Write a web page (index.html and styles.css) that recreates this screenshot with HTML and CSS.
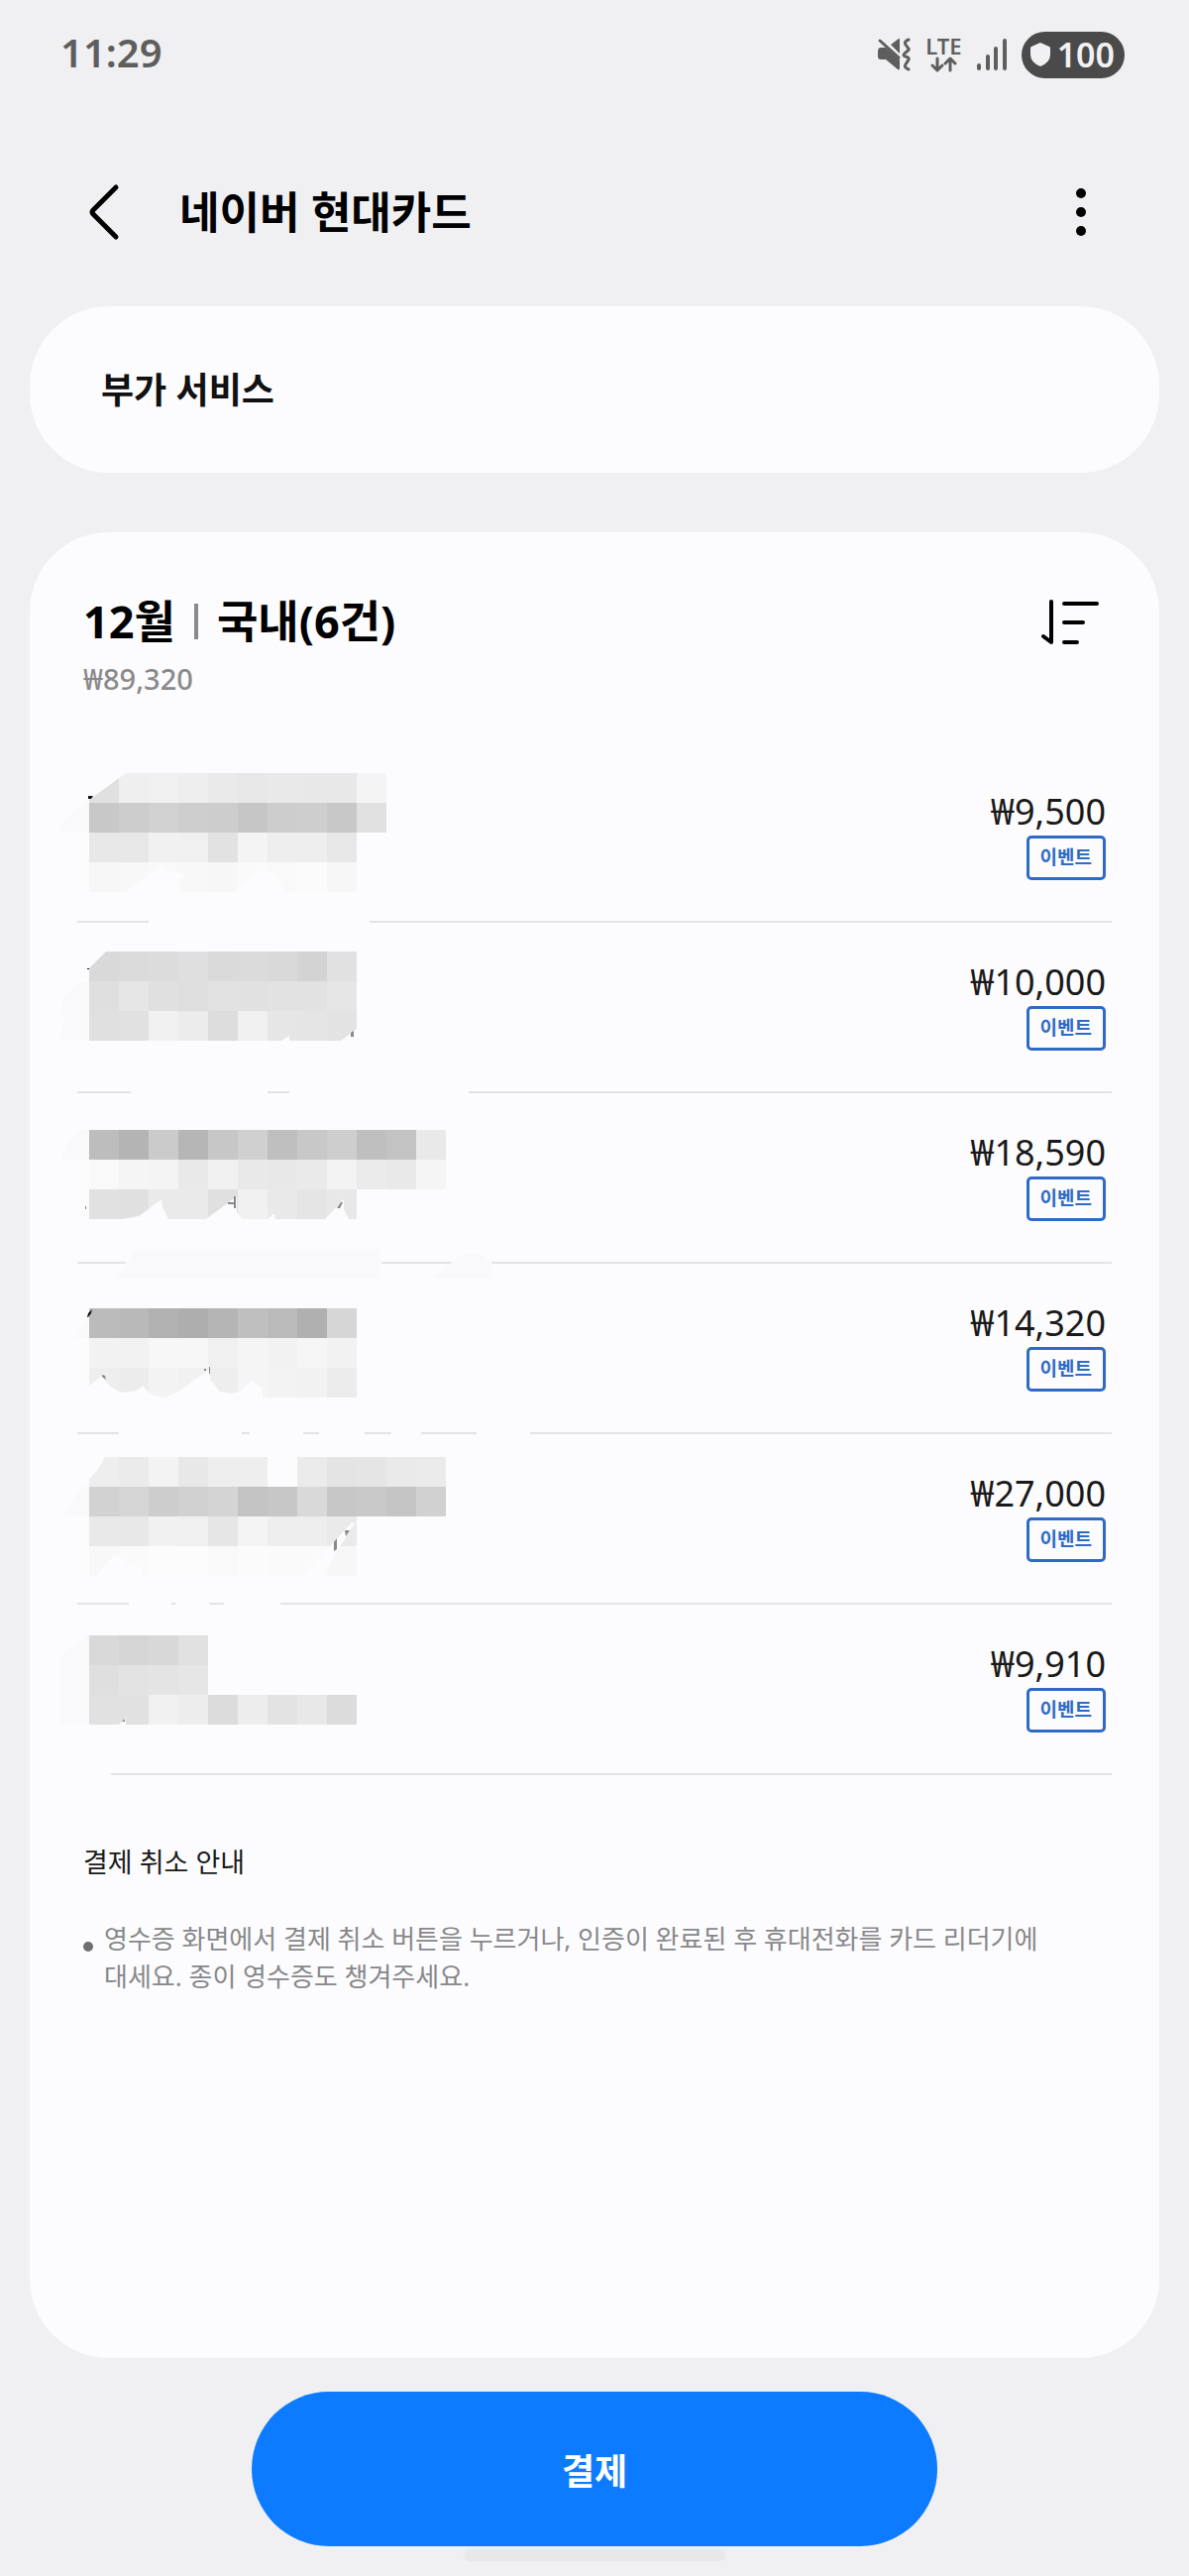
FILE: index.html
```html
<!DOCTYPE html>
<html lang="ko">
<head>
    <meta charset="UTF-8">
    <meta name="viewport" content="width=device-width, initial-scale=1.0">
    <title>네이버 현대카드</title>
    <link rel="stylesheet" href="styles.css">
</head>
<body>
    <!-- Status bar -->
    <div class="status-bar">
        <span class="clock">11:29</span>
        <div class="status-icons">
            <svg class="icon-mute" width="34" height="34" viewBox="0 0 34 34" aria-hidden="true">
                <path d="M1 14Q1 10 4 10H9L23 22V31Q23 33 21 32L9 22H4Q1 22 1 19Z" fill="#5e5e5e"/>
                <path d="M14 7L22 1Q23 0 23 2V16Z" fill="#5e5e5e"/>
                <path d="M3 3L22 20" stroke="#5e5e5e" stroke-width="3" stroke-linecap="round"/>
                <path d="M32 2Q27 4 29 7T32 11T29 15T29 19T32 22T29 27T32 32" fill="none" stroke="#5e5e5e" stroke-width="3" stroke-linecap="round"/>
            </svg>
            <div class="network">
                <span>LTE</span>
                <svg width="28" height="16" viewBox="0 0 28 16" fill="none" stroke="#5e5e5e" stroke-width="3" stroke-linecap="round" stroke-linejoin="round" aria-hidden="true">
                    <path d="M8 2V14M3 9L8 14L13 9"/>
                    <path d="M21 14V2M16 7L21 2L26 7"/>
                </svg>
            </div>
            <svg width="30" height="34" viewBox="0 0 30 34" stroke="#5e5e5e" stroke-width="4" stroke-linecap="round" aria-hidden="true">
                <path d="M2 28V31M11 19V31M19 11V31M28 3V31"/>
            </svg>
            <div class="battery">
                <svg width="22" height="24" viewBox="0 0 22 24" aria-hidden="true">
                    <path d="M11 0L20 4Q21 4 21 6V12Q21 20 11 24Q1 20 1 12V6Q1 4 2 4Z" fill="#f1f1f3"/>
                </svg>
                <span>100</span>
            </div>
        </div>
    </div>

    <!-- App bar -->
    <header class="app-bar">
        <button type="button" class="icon-button" aria-label="뒤로">
            <svg width="34" height="58" viewBox="0 0 34 58" fill="none" stroke="#000" stroke-width="5" stroke-linecap="round" stroke-linejoin="round">
                <path d="M29 4L6 27Q4 29 6 31L29 54"/>
            </svg>
        </button>
        <h1>네이버 현대카드</h1>
        <button type="button" class="icon-button" aria-label="더보기">
            <svg width="12" height="50" viewBox="0 0 12 50">
                <circle cx="6" cy="6" r="5"/>
                <circle cx="6" cy="25" r="5"/>
                <circle cx="6" cy="44" r="5"/>
            </svg>
        </button>
    </header>

    <main>
        <a href="#" class="card service-card">부가 서비스</a>

        <section class="card history">
            <div class="history-head">
                <div>
                    <h2>12월<span class="separator"></span>국내(6건)</h2>
                    <p class="total">₩89,320</p>
                </div>
                <button type="button" class="icon-button sort" aria-label="정렬">
                    <svg width="60" height="50" viewBox="0 0 60 50" fill="none" stroke="#000" stroke-width="4" stroke-linecap="round" stroke-linejoin="round">
                        <path d="M11 4V45L3 39"/>
                        <path d="M24 6H57M24 25H43M24 45H37"/>
                    </svg>
                </button>
            </div>

            <ul class="payments">
                <li><svg class="mosaic" aria-hidden="true"></svg><span class="amount">₩9,500</span><span class="badge">이벤트</span></li>
                <li><svg class="mosaic" aria-hidden="true"></svg><span class="amount">₩10,000</span><span class="badge">이벤트</span></li>
                <li><svg class="mosaic" aria-hidden="true"></svg><span class="amount">₩18,590</span><span class="badge">이벤트</span></li>
                <li><svg class="mosaic" aria-hidden="true"></svg><span class="amount">₩14,320</span><span class="badge">이벤트</span></li>
                <li><svg class="mosaic" aria-hidden="true"></svg><span class="amount">₩27,000</span><span class="badge">이벤트</span></li>
                <li><svg class="mosaic" aria-hidden="true"></svg><span class="amount">₩9,910</span><span class="badge">이벤트</span></li>
            </ul>

            <div class="notice">
                <h3>결제 취소 안내</h3>
                <ul>
                    <li>영수증 화면에서 결제 취소 버튼을 누르거나, 인증이 완료된 후 휴대전화를 카드 리더기에 대세요. 종이 영수증도 챙겨주세요.</li>
                </ul>
            </div>
        </section>
    </main>

    <footer>
        <button type="button" class="pay-button">결제</button>
        <div class="home-handle"></div>
    </footer>

    <script src="script.js"></script>
</body>
</html>
```

FILE: styles.css
```css
* {
    box-sizing: border-box;
}

body {
    margin: 0;
    min-height: 100vh;
    display: flex;
    flex-direction: column;
    background: #f0f0f2;
    color: #000;
    font-family: "Noto Sans", "Noto Sans CJK KR", sans-serif;
}

h1, h2, h3, p, ul {
    margin: 0;
    padding: 0;
}

ul {
    list-style: none;
}

.icon-button {
    display: flex;
    padding: 0;
    border: none;
    background: none;
    cursor: pointer;
}

/* Status bar */
.status-bar {
    display: flex;
    justify-content: space-between;
    align-items: center;
    height: 110px;
    padding: 0 65px 0 61px;
}

.clock {
    padding-bottom: 5px;
    color: #5e5e5e;
    font-size: 40px;
    font-weight: 600;
}

.status-icons {
    display: flex;
    align-items: center;
    gap: 15px;
}

.network {
    display: flex;
    flex-direction: column;
    align-items: center;
    gap: 2px;
    color: #5e5e5e;
    font-size: 22px;
    font-weight: 600;
    line-height: 18px;
}

.battery {
    display: flex;
    align-items: center;
    gap: 6px;
    height: 47px;
    padding: 0 10px 0 8px;
    border-radius: 24px;
    background: #4a4a4a;
    color: #f1f1f3;
    font-size: 34px;
    font-weight: 600;
    line-height: 47px;
}

/* App bar */
.app-bar {
    display: flex;
    align-items: center;
    height: 199px;
    padding: 8px 103px 0 88px;
}

.app-bar h1 {
    flex: 1;
    margin-left: 59px;
    font-size: 44px;
    font-weight: 700;
    line-height: 56px;
}

/* Cards */
main {
    flex: 1;
    display: flex;
    flex-direction: column;
    gap: 60px;
    padding: 0 30px;
}

.card {
    border-radius: 80px;
    background: #fcfcfe;
}

.service-card {
    padding: 55px 72px 53px;
    color: #111;
    font-size: 36px;
    font-weight: 600;
    line-height: 60px;
    text-decoration: none;
}

.history {
    flex: 1;
    padding: 60px 48px;
}

.history-head {
    display: flex;
    justify-content: space-between;
    align-items: flex-start;
    padding: 0 12px 0 6px;
}

.history-head h2 {
    display: flex;
    align-items: center;
    font-size: 45px;
    font-weight: 700;
    line-height: 60px;
}

.separator {
    width: 4px;
    height: 36px;
    margin: 0 19px;
    background: #8a8a8a;
}

.total {
    color: #8a8a8a;
    font-size: 29px;
    font-weight: 500;
    line-height: 56px;
}

.sort {
    padding-top: 6px;
}

/* Payment list */
.payments {
    margin-top: 46px;
}

.payments li {
    position: relative;
    display: flex;
    flex-direction: column;
    align-items: flex-end;
    height: 172px;
    padding: 36px 6px 0;
    border-bottom: 2px solid #e3e3e5;
}

.amount {
    color: #1a1a1a;
    font-size: 36px;
    line-height: 48px;
}

.badge {
    padding: 0 11px;
    border: 3px solid #2f6bc6;
    border-radius: 5px;
    color: #2f6bc6;
    font-size: 19px;
    font-weight: 700;
    line-height: 39px;
}

/* Blurred merchant names, laid over the rows and their dividers */
.mosaic {
    position: absolute;
    top: 0;
    left: -18px;
    width: 500px;
    height: 172px;
    overflow: visible;
}

/* Notice */
.notice {
    padding: 68px 6px 0;
}

.notice h3 {
    color: #1a1a1a;
    font-size: 27px;
    font-weight: 400;
    line-height: 40px;
}

.notice ul {
    margin-top: 38px;
}

.notice li {
    display: flex;
    gap: 11px;
    padding-right: 60px;
    color: #88888a;
    font-size: 26px;
    line-height: 38px;
    word-break: keep-all;
}

.notice li::before {
    content: "";
    flex: none;
    width: 10px;
    height: 10px;
    margin-top: 22px;
    border-radius: 50%;
    background: #6e6e70;
}

/* Bottom bar */
footer {
    display: flex;
    flex-direction: column;
    align-items: center;
    padding: 34px 0 15px;
}

.pay-button {
    width: 90%;
    max-width: 692px;
    height: 156px;
    border: none;
    border-radius: 78px;
    background: #0d7bff;
    color: #fff;
    font-family: inherit;
    font-size: 36px;
    font-weight: 700;
    cursor: pointer;
}

.home-handle {
    width: 22%;
    height: 12px;
    margin-top: 3px;
    border-radius: 6px;
    background: #e8e8e8;
}
```

FILE: script.js
```javascript
// Each row: top edge of the mosaic, grey levels per 30px cell,
// faint patches, bits cut away, gaps in the divider and dark specks.
const rows = [
    {
        top: 21,
        cells: [
            'e0 ef f0 ee ea e7 e9 e8 e8 f4',
            'c8 cd d2 ce cd c6 cd ce c8 e1',
            'e8 e7 f1 f0 e2 f4 ee ee e7',
            'f7 f8 f9 f8 f7 fa f9 fb f7'
        ],
        patch: 'M0 74L25 51H30V81H0Z',
        cut: 'M30 21H67L30 48ZM67 141L90 124L103 114L113 121L128 122L122 131L120 141ZM177 141L203 119L220 125L227 141Z',
        gaps: [[90, 313]],
        dark: 'M29 44H34L32 47H29Z'
    },
    {
        top: 29,
        cells: [
            'd9 db dc df da db d9 d3 e1',
            'df e6 e0 de e2 e1 e2 e2 e6',
            'e0 e1 f1 ec dd f0 e6 e5 e3'
        ],
        patch: 'M0 118L5 102L2 89L5 76L17 62L30 59V118Z',
        cut: 'M30 29H47L30 46ZM284 119L300 107V119ZM224 119L232 114V119Z',
        gaps: [[72, 210], [232, 413]],
        dark: 'M28 46H30V47H28Z',
        grey: 'M294 111L297 109V115H294Z'
    },
    {
        top: 37,
        cells: [
            'bd b4 cb b6 c7 d0 bf c8 ce bf c3 e9',
            'f9 f5 f4 e9 f0 e9 e8 ea f3 eb e9 f5',
            'e1 e0 ea ea e0 f1 e9 e5 e8'
        ],
        patch: 'M2 67L8 50L21 37H30V67ZM56 187L67 172L77 157H324V187ZM375 187L397 170L405 163L417 161L430 165L436 174L438 187Z',
        cut: 'M63 127L80 124L103 107L104 115L110 127ZM148 127L179 104V120L184 127ZM210 127L217 121L218 127ZM268 127L287 107V117L292 127Z',
        gaps: [[396, 436], [67, 325]],
        grey: 'M170 110H176V104H178V116H176V112H170ZM280 116L284 110H286L283 116ZM26 114H27V117H26Z'
    },
    {
        top: 45,
        cells: [
            'bb b9 b1 ae b5 bf ba b0 d6',
            'f2 f2 f7 f7 f0 f5 f2 f6 f2',
            'ee ec f3 f1 ee f5 f3 f2 ec'
        ],
        patch: 'M16 75L30 55V75Z',
        cut: 'M30 135V123L43 113L50 123L60 129L68 130L80 127L84 123L91 131L103 135ZM106 135L120 129L151 107L153 118L162 129L172 131L182 129L193 118L205 125V135Z',
        gaps: [[60, 184], [192, 246], [262, 308], [335, 365], [421, 475]],
        dark: 'M28 54L29 50L33 46L32 50L29 54Z',
        grey: 'M43 112L46 113L47 117L43 114ZM151 104H152V111H151ZM146 106H148V108H146Z'
    },
    {
        top: 23,
        cells: [
            'ee eb f3 e8 ee ee -- eb e4 e5 ea eb',
            'd2 d5 cd d1 d4 c3 c7 d9 c7 c9 c5 d1',
            'e9 e8 f1 f0 e6 f4 ee ee ea',
            'f8 fa fc fc f9 fb fa fa f7'
        ],
        patch: 'M3 83L10 70L23 53H30V83Z',
        cut: 'M30 23H46L37 38L30 45ZM37 143L57 121L68 131L82 133L84 143ZM245 143L273 113L295 89L298 90L275 126L267 143Z',
        gaps: [[70, 113], [117, 151], [166, 223]],
        grey: 'M277 109L280 105V116L277 118ZM288 97H293L289 103Z'
    },
    {
        top: 31,
        cells: [
            'd9 d5 d8 e1',
            'df e3 e4 e6',
            'e1 e1 f1 ed dc ed e3 e8 dc'
        ],
        patch: 'M0 53L28 31H30V121H0Z',
        cut: 'M60 121L67 114V121Z',
        gaps: [[18, 52]],
        grey: 'M63 118L66 115V118Z'
    }
];

const CELL = 30;

document.querySelectorAll('.mosaic').forEach(function (svg, i) {
    const row = rows[i];
    let out = '';

    row.gaps.forEach(function (gap) {
        out += `<rect x="${gap[0]}" y="168" width="${gap[1] - gap[0]}" height="6" fill="#fcfcfe"/>`;
    });
    out += `<path d="${row.patch}" fill="#f9f9fb"/>`;

    row.cells.forEach(function (line, y) {
        line.split(' ').forEach(function (level, x) {
            if (level === '--') return;
            out += `<rect x="${(x + 1) * CELL}" y="${row.top + y * CELL}" width="${CELL}" height="${CELL}" fill="#${level.repeat(3)}"/>`;
        });
    });

    out += `<path d="${row.cut}" fill="#fcfcfe"/>`;
    if (row.dark) out += `<path d="${row.dark}" fill="#111"/>`;
    if (row.grey) out += `<path d="${row.grey}" fill="#888"/>`;
    svg.innerHTML = out;
});
```
